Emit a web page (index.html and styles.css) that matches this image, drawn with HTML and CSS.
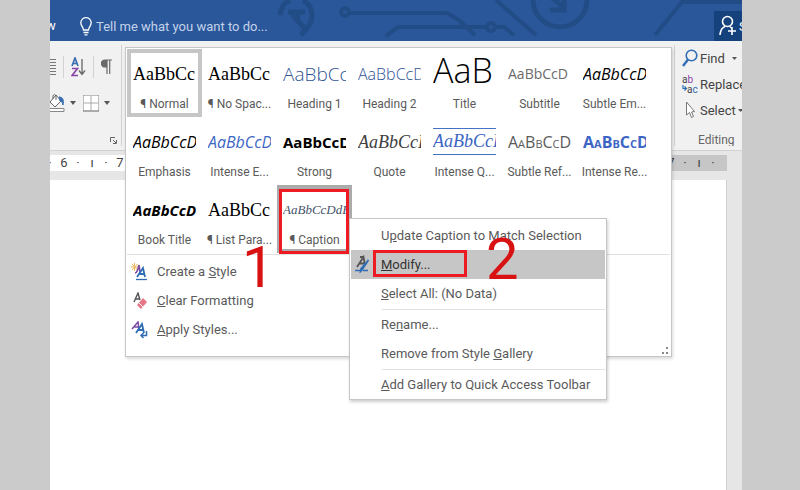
FILE: index.html
```html
<!DOCTYPE html>
<html lang="en">
<head>
    <meta charset="UTF-8">
    <meta name="viewport" content="width=device-width, initial-scale=1.0">
    <title>Modify Caption Style</title>
    <link rel="stylesheet" href="styles.css">
</head>
<body>

<div class="app">
    <!-- Title bar -->
    <header class="titlebar">
        <svg class="circuit" width="692" height="41" viewBox="0 0 692 41" fill="none" stroke="#224c86" stroke-width="4" aria-hidden="true">
            <path d="M230 15a18 18 0 0 1 10-15M253 0a18 18 0 0 1 4 28l-6 7" stroke-width="5"/>
            <path d="M238 12h17M242 14l13 15M248 12v8" stroke-width="5"/>
            <circle cx="295" cy="12" r="4"/>
            <path d="M300 13h97l12 7 16 15"/>
            <path d="M336 36l12-9h88"/>
            <circle cx="441" cy="27" r="4"/>
            <path d="M446 27h8l10 8M446 0l40 35"/>
            <circle cx="510" cy="0" r="27" stroke-width="5"/>
            <path d="M498 -6l16 14M514 -4v14h-14" stroke-width="5"/>
            <path d="M605 35l27-33h60"/>
        </svg>
        <span class="tab">w</span>
        <label class="tell-me">
            <svg width="12" height="19" viewBox="0 0 12 19" fill="none" stroke="#fff" stroke-width="1.3" aria-hidden="true">
                <path d="M3.5 13c0-3-2.7-4-2.7-7.200a5.200 5.200 0 0 1 10.400 0c0 3.200-2.700 4.200-2.700 7.200zM3.500 15.500h5M4.500 17.800h3"/>
            </svg>
            <input type="text" placeholder="Tell me what you want to do...">
        </label>
        <button class="share" type="button">
            <svg width="18" height="22" viewBox="0 0 18 22" fill="none" stroke="#fff" stroke-width="1.6" aria-hidden="true">
                <circle cx="8.500" cy="6.500" r="5"/>
                <path d="M1 20c.5-5 2-7.500 5-8.500M11 11.500l2 2M9 16h8M13 12v8"/>
            </svg>
            <span>Share</span>
        </button>
    </header>

    <!-- Ribbon -->
    <div class="ribbon">
        <section class="group paragraph">
            <div class="tools">
                <button type="button" class="tool lines" aria-label="Justify">
                    <svg width="6" height="18" viewBox="0 0 6 18" stroke="#777" aria-hidden="true">
                        <path d="M0 1.500h6M0 4.500h6M0 7.500h6M0 10.500h6M0 13.500h6M0 16.500h6"/>
                    </svg>
                </button>
                <span class="bar"></span>
                <button type="button" class="tool" aria-label="Sort">
                    <svg width="15" height="20" viewBox="0 0 15 20" fill="none" stroke-width="1.700" aria-hidden="true">
                        <path d="M1 9l3-8 3 8M2 6.500h4" stroke="#3a6db0"/>
                        <path d="M1 11.500h5.500l-5.500 7h6" stroke="#8a45a8"/>
                        <path d="M11 2v15M8 13.500l3 4 3-4" stroke="#666" stroke-width="1.300"/>
                    </svg>
                </button>
                <span class="bar"></span>
                <button type="button" class="tool" aria-label="Show formatting marks">
                    <svg width="11" height="16" viewBox="0 0 11 16" fill="none" stroke="#6a6a6a" stroke-width="1.200" aria-hidden="true">
                        <path d="M6 8H4a3.500 3.500 0 0 1 0-7h7M6 1v14M8.700 1v14"/>
                        <path d="M5.500 1.500H4a3 3 0 0 0 0 6h1.500z" fill="#6a6a6a"/>
                    </svg>
                </button>
            </div>
            <div class="tools">
                <button type="button" class="tool split" aria-label="Shading">
                    <svg width="15" height="20" viewBox="0 0 15 20" fill="none" stroke="#666" aria-hidden="true">
                        <path d="M0 9l6-7 5 6-6 6zM3 6V2.500a2 2 0 0 1 3 0V7" fill="#fff"/>
                        <path d="M9 4c4 0 5 3 4 8-1-3-1-4-3-4z" fill="#3a6db0" stroke="#3a6db0"/>
                        <path d="M0 15.500h14v3H0" fill="#fff" stroke="#888"/>
                    </svg>
                    <svg width="6" height="4" aria-hidden="true"><path d="M0 0h6L3 4z" fill="#555"/></svg>
                </button>
                <button type="button" class="tool split" aria-label="Borders">
                    <svg width="16" height="17" viewBox="0 0 16 17" fill="none" stroke="#888" aria-hidden="true">
                        <rect x="1" y="1" width="14" height="14" fill="#fff" stroke="none"/>
                        <path d="M.5 .5h15M.5 .5v15M15.500 .5v15" stroke-dasharray="1 1"/>
                        <path d="M1 8h14M8 1v14" stroke="#aaa"/>
                        <path d="M0 16h16" stroke="#666"/>
                    </svg>
                    <svg width="6" height="4" aria-hidden="true"><path d="M0 0h6L3 4z" fill="#555"/></svg>
                </button>
            </div>
            <button type="button" class="launcher" aria-label="Paragraph settings">
                <svg width="7" height="7" viewBox="0 0 7 7" fill="none" stroke="#666" aria-hidden="true">
                    <path d="M.5 5V.5H5M3 3l3 3M6.500 3v3.500H3"/>
                </svg>
            </button>
        </section>
        <section class="group editing">
            <button type="button" class="edit">
                <svg width="16" height="18" viewBox="0 0 16 18" fill="none" stroke="#2f6db5" aria-hidden="true">
                    <circle cx="9.500" cy="6.500" r="5.300" stroke-width="1.600"/>
                    <path d="M6 10.500L1 17" stroke-width="2.400"/>
                </svg>
                <span>Find</span>
                <svg class="caret" width="5" height="3" aria-hidden="true"><path d="M0 0h5L2.500 3z" fill="#555"/></svg>
            </button>
            <button type="button" class="edit">
                <svg width="16" height="19" viewBox="0 0 16 19" aria-hidden="true">
                    <text x="0" y="8" class="glyph purple"><tspan class="dark">a</tspan>b</text>
                    <text x="5" y="18" class="glyph dark">a<tspan class="blue">c</tspan></text>
                    <path d="M1 10v3.500h3M2.500 11.500l2 2-2 2" fill="none" stroke="#2f6db5" stroke-width="1.200"/>
                </svg>
                <span>Replace</span>
            </button>
            <button type="button" class="edit">
                <svg width="16" height="18" viewBox="0 0 16 18" fill="#fff" stroke="#777" aria-hidden="true">
                    <path d="M4.500 1v13l3-2.500 2 5 2-1-2-4.500 3-.5z"/>
                </svg>
                <span>Select</span>
                <svg width="5" height="3" aria-hidden="true"><path d="M0 0h5L2.500 3z" fill="#555"/></svg>
            </button>
            <div class="group-name">Editing</div>
        </section>
    </div>

    <!-- Document -->
    <main class="document">
        <div class="ruler">
            <div class="marks start"><span>·</span><span>6</span><span>·</span><span>ı</span><span>·</span><span>7</span></div>
            <div class="marks end"><span>7</span><span>·</span><span>ı</span><span>·</span></div>
        </div>
        <div class="page"></div>
    </main>

    <!-- Style gallery -->
    <div class="gallery">
        <div class="styles">
            <button type="button" class="style current"><span class="sample serif">AaBbCc</span><span class="name">¶ Normal</span></button>
            <button type="button" class="style"><span class="sample serif">AaBbCc</span><span class="name">¶ No Spac...</span></button>
            <button type="button" class="style"><span class="sample heading1">AaBbCc</span><span class="name">Heading 1</span></button>
            <button type="button" class="style"><span class="sample heading2">AaBbCcD</span><span class="name">Heading 2</span></button>
            <button type="button" class="style"><span class="sample title">AaB</span><span class="name">Title</span></button>
            <button type="button" class="style"><span class="sample subtitle">AaBbCcD</span><span class="name">Subtitle</span></button>
            <button type="button" class="style"><span class="sample italic">AaBbCcD</span><span class="name">Subtle Em...</span></button>

            <button type="button" class="style"><span class="sample italic">AaBbCcD</span><span class="name">Emphasis</span></button>
            <button type="button" class="style"><span class="sample italic blue">AaBbCcD</span><span class="name">Intense E...</span></button>
            <button type="button" class="style"><span class="sample bold">AaBbCcD</span><span class="name">Strong</span></button>
            <button type="button" class="style"><span class="sample quote">AaBbCcD</span><span class="name">Quote</span></button>
            <button type="button" class="style"><span class="sample quote ruled blue">AaBbCcD</span><span class="name">Intense Q...</span></button>
            <button type="button" class="style"><span class="sample caps">AaBbCcD</span><span class="name">Subtle Ref...</span></button>
            <button type="button" class="style"><span class="sample caps bold blue">AaBbCcD</span><span class="name">Intense Re...</span></button>

            <button type="button" class="style"><span class="sample italic bold">AaBbCcD</span><span class="name">Book Title</span></button>
            <button type="button" class="style"><span class="sample serif">AaBbCc</span><span class="name">¶ List Para...</span></button>
            <button type="button" class="style selected"><span class="sample caption">AaBbCcDdE</span><span class="name">¶ Caption</span></button>
        </div>
        <div class="commands">
            <button type="button" class="command">
                <svg width="18" height="18" viewBox="0 0 18 18" fill="none" aria-hidden="true">
                    <path d="M3.500 0v8M0 4h8M1 1l5.500 6M6.500 1L1 7" stroke="#edb95e"/>
                    <path d="M4 10c2 0 3-3 4-8l1 7" stroke="#7a4aa5" stroke-width="1.600"/>
                    <path d="M6 14l6-9 2 9M8.500 11h5" stroke="#2f6db5" stroke-width="1.800"/>
                    <path d="M5 16.500h11" stroke="#2f6db5" stroke-width="1.300"/>
                </svg>
                <span>Create a <u>S</u>tyle</span>
            </button>
            <button type="button" class="command">
                <svg width="18" height="18" viewBox="0 0 18 18" fill="none" aria-hidden="true">
                    <path d="M3 10l4-9 2 7M4.500 7h4" stroke="#555" stroke-width="1.400"/>
                    <path d="M6 13l6-7 4 4-6 7z" fill="#e87686"/>
                    <path d="M8 11l4 4" stroke="#fff"/>
                </svg>
                <span><u>C</u>lear Formatting</span>
            </button>
            <button type="button" class="command">
                <svg width="18" height="18" viewBox="0 0 18 18" fill="none" aria-hidden="true">
                    <path d="M1 8l6-7 1 8M3.500 6H8" stroke="#7a4aa5" stroke-width="1.500"/>
                    <path d="M5 12l6-9 2 9M7.500 9H12" stroke="#2f6db5" stroke-width="1.800"/>
                    <path d="M15.500 10v4.500h-5M12.500 12l-2.500 2.500 2.500 2.500" stroke="#2f6db5" stroke-width="1.500"/>
                </svg>
                <span><u>A</u>pply Styles...</span>
            </button>
        </div>
        <svg class="grip" width="8" height="8" viewBox="0 0 8 8" fill="#8a8a8a" aria-hidden="true">
            <path d="M5 0h2v2H5zM5 5h2v2H5zM1 5h2v2H1z"/>
        </svg>
    </div>

    <!-- Right-click menu of the Caption style -->
    <div class="context-menu">
        <button type="button" class="item">U<u>p</u>date Caption to Match Selection</button>
        <button type="button" class="item active">
            <svg class="item-icon" width="18" height="18" viewBox="0 0 18 18" fill="none" aria-hidden="true">
                <path d="M3 12L9.500 2l1.500 8M5.500 8.500h5M6 2h4" stroke="#555" stroke-width="1.800"/>
                <path d="M14.500 5L8 15l-1.500 1.500.5-3z" stroke="#2f6db5" stroke-width="1.600"/>
                <path d="M1 15.500h5M9 15.500h5" stroke="#2f6db5" stroke-width="1.500"/>
            </svg>
            <u>M</u>odify...
        </button>
        <button type="button" class="item"><u>S</u>elect All: (No Data)</button>
        <hr>
        <button type="button" class="item">Re<u>n</u>ame...</button>
        <button type="button" class="item">Remove from Style <u>G</u>allery</button>
        <hr>
        <button type="button" class="item"><u>A</u>dd Gallery to Quick Access Toolbar</button>
    </div>

    <!-- Step markers -->
    <div class="marker box-one"></div>
    <div class="marker box-two"></div>
    <span class="step step-one">1</span>
    <span class="step step-two">2</span>
</div>

</body>
</html>
```
FILE: styles.css
```css
* {
    box-sizing: border-box;
}

body {
    margin: 0;
    padding: 0 58px 0 50px;
    background-color: #cbcbcb;
    font-family: Roboto, "Open Sans", sans-serif;
    font-size: 13px;
    color: #5a5a5a;
}

button {
    background: none;
    border: none;
    padding: 0;
    margin: 0;
    font: inherit;
    color: inherit;
    text-align: left;
    white-space: nowrap;
}

svg {
    flex-shrink: 0;
}

.app {
    position: relative;
    display: flex;
    flex-direction: column;
    min-height: 100vh;
    overflow: hidden;
}

/* Title bar */
.titlebar {
    position: relative;
    display: flex;
    align-items: flex-end;
    height: 41px;
    background-color: #2a579a;
    color: #fff;
    overflow: hidden;
}

.circuit {
    position: absolute;
    left: 0;
    top: 0;
}

.tab {
    width: 30px;
    line-height: 30px;
    margin-left: -4px;
    padding-right: 4px;
}

.tell-me {
    position: relative;
    display: flex;
    align-items: center;
    gap: 4px;
    height: 30px;
    margin-left: 4px;
}

.tell-me input {
    width: 200px;
    padding: 0;
    border: none;
    background: none;
    font: inherit;
    color: #fff;
}

.tell-me input::placeholder {
    color: #c3d2ea;
    opacity: 1;
}

.share {
    position: relative;
    display: flex;
    align-items: center;
    gap: 2px;
    width: 28px;
    height: 30px;
    margin-left: auto;
    padding-left: 5px;
    background-color: #15427c;
    overflow: hidden;
}

/* Ribbon */
.ribbon {
    display: flex;
    justify-content: space-between;
    height: 110px;
    background-color: #f1f1f1;
    border-bottom: 1px solid #d2d2d2;
}

.group {
    margin: 4px 0;
}

.paragraph {
    display: flex;
    flex-direction: column;
    width: 72px;
    padding-top: 4px;
    border-right: 1px solid #d2d2d2;
}

.tools {
    display: flex;
    align-items: center;
    gap: 7px;
    height: 36px;
}

.tool {
    display: flex;
    align-items: center;
}

.split {
    gap: 5px;
}

.bar {
    width: 1px;
    height: 22px;
    background-color: #d2d2d2;
}

.launcher {
    display: flex;
    margin: 16px 4px 0 auto;
}

.editing {
    width: 68px;
    padding: 0 0 0 7px;
    border-left: 1px solid #d2d2d2;
    color: #444;
    overflow: hidden;
}

.edit {
    display: flex;
    align-items: center;
    gap: 2px;
    height: 26px;
}

.edit .caret {
    margin-left: 5px;
}

.glyph {
    font-size: 10px;
}

.purple {
    fill: #8a45a8;
}

.dark {
    fill: #444;
}

.glyph .blue {
    fill: #2f6db5;
}

.group-name {
    padding: 10px 0 0 16px;
    font-size: 12px;
    color: #666;
}

/* Document */
.document {
    display: flex;
    flex: 1;
    flex-direction: column;
    padding: 4px 15px 0 0;
    background-color: #e6e6e6;
}

.ruler {
    display: flex;
    height: 16px;
    line-height: 16px;
    color: #444;
}

.marks {
    display: flex;
    flex: 1;
}

.marks span {
    width: 14px;
    text-align: center;
}

.start {
    margin-left: -7px;
    background-color: #fff;
}

.end {
    justify-content: flex-end;
    padding-right: 7px;
    background-color: #c6c6c6;
}

.page {
    flex: 1;
    margin-top: 9px;
    background-color: #fff;
    border-right: 1px solid #cfcfcf;
}

/* Style gallery */
.gallery {
    position: absolute;
    top: 47px;
    left: 75px;
    right: 70px;
    padding: 1px 1px 10px;
    background-color: #fff;
    border: 1px solid #c6c6c6;
    box-shadow: 1px 2px 3px rgba(0, 0, 0, 0.15);
}

.styles {
    display: grid;
    grid-template-columns: repeat(7, 75px);
    grid-auto-rows: 68px;
    padding-bottom: 1px;
    border-bottom: 1px solid #e1e1e1;
}

.style {
    display: flex;
    flex-direction: column;
    padding: 4px 2px 0;
    border: 4px solid transparent;
}

.current {
    border-color: #c6c6c6;
}

.selected {
    border-color: #ababab;
}

.sample {
    width: 63px;
    height: 34px;
    line-height: 34px;
    font-family: "Open Sans", sans-serif;
    font-size: 15px;
    color: #222;
    overflow: hidden;
}

.name {
    display: flex;
    justify-content: center;
    width: 63px;
    margin-top: 4px;
    font-size: 12px;
    line-height: 18px;
}

.serif {
    font-family: "Liberation Serif", serif;
    font-size: 18px;
    color: #000;
}

.heading1 {
    font-size: 19px;
    font-weight: 300;
    color: #2f5496;
}

.heading2 {
    font-size: 16px;
    font-weight: 300;
    color: #2f5496;
}

.title {
    font-size: 34px;
    line-height: 26px;
    font-weight: 300;
    color: #000;
}

.subtitle {
    font-size: 14px;
    color: #6a6a6a;
}

.italic {
    font-style: italic;
    font-size: 16px;
    color: #000;
}

.bold {
    font-size: 15px;
    font-weight: 700;
    color: #000;
}

.quote {
    font-family: "Liberation Serif", serif;
    font-style: italic;
    font-size: 18px;
    color: #404040;
}

.caps {
    font-variant: small-caps;
    font-size: 16px;
    color: #5a5a5a;
}

.sample.blue {
    color: #3c66c4;
}

.ruled {
    height: 27px;
    margin: 3px 0 4px;
    line-height: 25px;
    border-top: 1px solid #4472c4;
    border-bottom: 1px solid #4472c4;
}

.caption {
    font-family: "Liberation Serif", serif;
    font-style: italic;
    font-size: 13px;
    color: #44546a;
}

.commands {
    display: flex;
    flex-direction: column;
    align-items: flex-start;
    padding: 2px 4px;
}

.command {
    display: flex;
    align-items: center;
    gap: 8px;
    height: 29px;
}

.grip {
    position: absolute;
    right: 2px;
    bottom: 1px;
}

/* Context menu */
.context-menu {
    position: absolute;
    top: 218px;
    left: 299px;
    display: flex;
    flex-direction: column;
    min-width: 258px;
    padding: 2px 1px 0;
    background-color: #fff;
    border: 1px solid #c6c6c6;
    box-shadow: 1px 2px 3px rgba(0, 0, 0, 0.2);
}

.item {
    position: relative;
    height: 29px;
    padding: 0 14px 0 30px;
}

.item.active {
    background-color: #c6c6c6;
    color: #333;
}

.item-icon {
    position: absolute;
    left: 3px;
    top: 5px;
}

hr {
    width: auto;
    height: 1px;
    margin: 1px 0 0 31px;
    border: none;
    background-color: #e1e1e1;
}

/* Step markers */
.marker {
    position: absolute;
    border: 3px solid #ed1c24;
}

.box-one {
    top: 189px;
    left: 229px;
    width: 70px;
    height: 65px;
}

.box-two {
    top: 250px;
    left: 323px;
    width: 94px;
    height: 27px;
}

.step {
    position: absolute;
    font-size: 58px;
    line-height: 60px;
    color: #d81212;
}

.step-one {
    top: 237px;
    left: 192px;
}

.step-two {
    top: 229px;
    left: 436px;
}
```
